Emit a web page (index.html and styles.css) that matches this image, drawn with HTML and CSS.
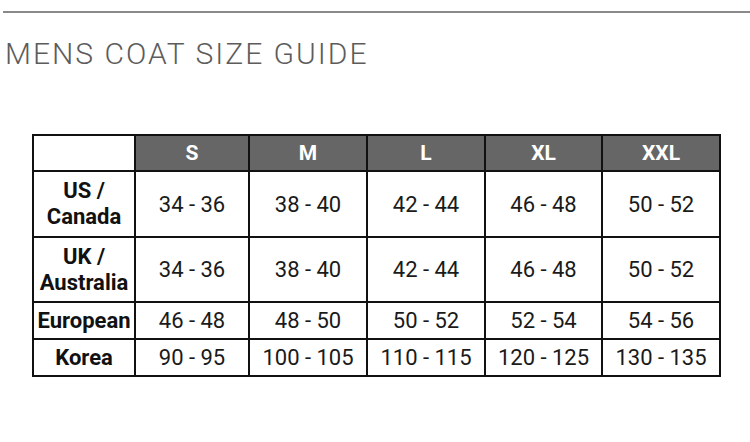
FILE: index.html
```html
<!DOCTYPE html>
<html>
<head>
<meta charset="utf-8">
<link rel="stylesheet" href="styles.css">
</head>
<body>
<div class="rule"></div>
<h1 class="title">MENS COAT SIZE GUIDE</h1>
<table class="sizes">
  <colgroup>
    <col class="c-label"><col class="c-s"><col class="c-m"><col class="c-l"><col class="c-xl"><col class="c-xxl">
  </colgroup>
  <thead>
    <tr class="head">
      <th class="blank"></th><th>S</th><th>M</th><th>L</th><th>XL</th><th>XXL</th>
    </tr>
  </thead>
  <tbody>
    <tr class="tall">
      <th>US /<br>Canada</th><td>34 - 36</td><td>38 - 40</td><td>42 - 44</td><td>46 - 48</td><td>50 - 52</td>
    </tr>
    <tr class="tall2">
      <th>UK /<br>Australia</th><td>34 - 36</td><td>38 - 40</td><td>42 - 44</td><td>46 - 48</td><td>50 - 52</td>
    </tr>
    <tr class="short">
      <th>European</th><td>46 - 48</td><td>48 - 50</td><td>50 - 52</td><td>52 - 54</td><td>54 - 56</td>
    </tr>
    <tr class="short">
      <th>Korea</th><td>90 - 95</td><td>100 - 105</td><td>110 - 115</td><td>120 - 125</td><td>130 - 135</td>
    </tr>
  </tbody>
</table>
</body>
</html>
```
FILE: styles.css
```css
html, body {
  margin: 0;
  padding: 0;
  background: #fff;
}
body {
  font-family: Roboto, "Liberation Sans", sans-serif;
  color: #111;
}
.rule {
  margin: 11px 0 0 3px;
  height: 2px;
  background: #8a8a8a;
}
.title {
  margin: 23px 0 0 5px;
  font-family: Roboto, sans-serif;
  font-weight: 300;
  font-size: 30px;
  line-height: 36px;
  letter-spacing: 2px;
  color: #5c5c5c;
}
.sizes {
  margin: 62px 0 0 32px;
  border-collapse: collapse;
  table-layout: fixed;
  width: 689px;
}
.c-label { width: 102px; }
.c-s { width: 114px; }
.c-m { width: 118px; }
.c-l { width: 118px; }
.c-xl { width: 117px; }
.c-xxl { width: 118px; }
.sizes th, .sizes td {
  border: 2px solid #111;
  padding: 0;
  text-align: center;
  vertical-align: middle;
}
.sizes td {
  font-size: 22px;
  font-weight: 400;
  color: #1a1a1a;
}
.sizes tbody th {
  font-size: 22px;
  font-weight: 700;
  line-height: 26px;
  color: #111;
}
.head th {
  background: #666;
  color: #fff;
  font-size: 21px;
  font-weight: 700;
  height: 34px;
}
.head th.blank {
  background: #fff;
}
.tall th, .tall td { height: 64px; }
.tall2 th, .tall2 td { height: 63px; }
.short th, .short td { height: 35px; }
```
